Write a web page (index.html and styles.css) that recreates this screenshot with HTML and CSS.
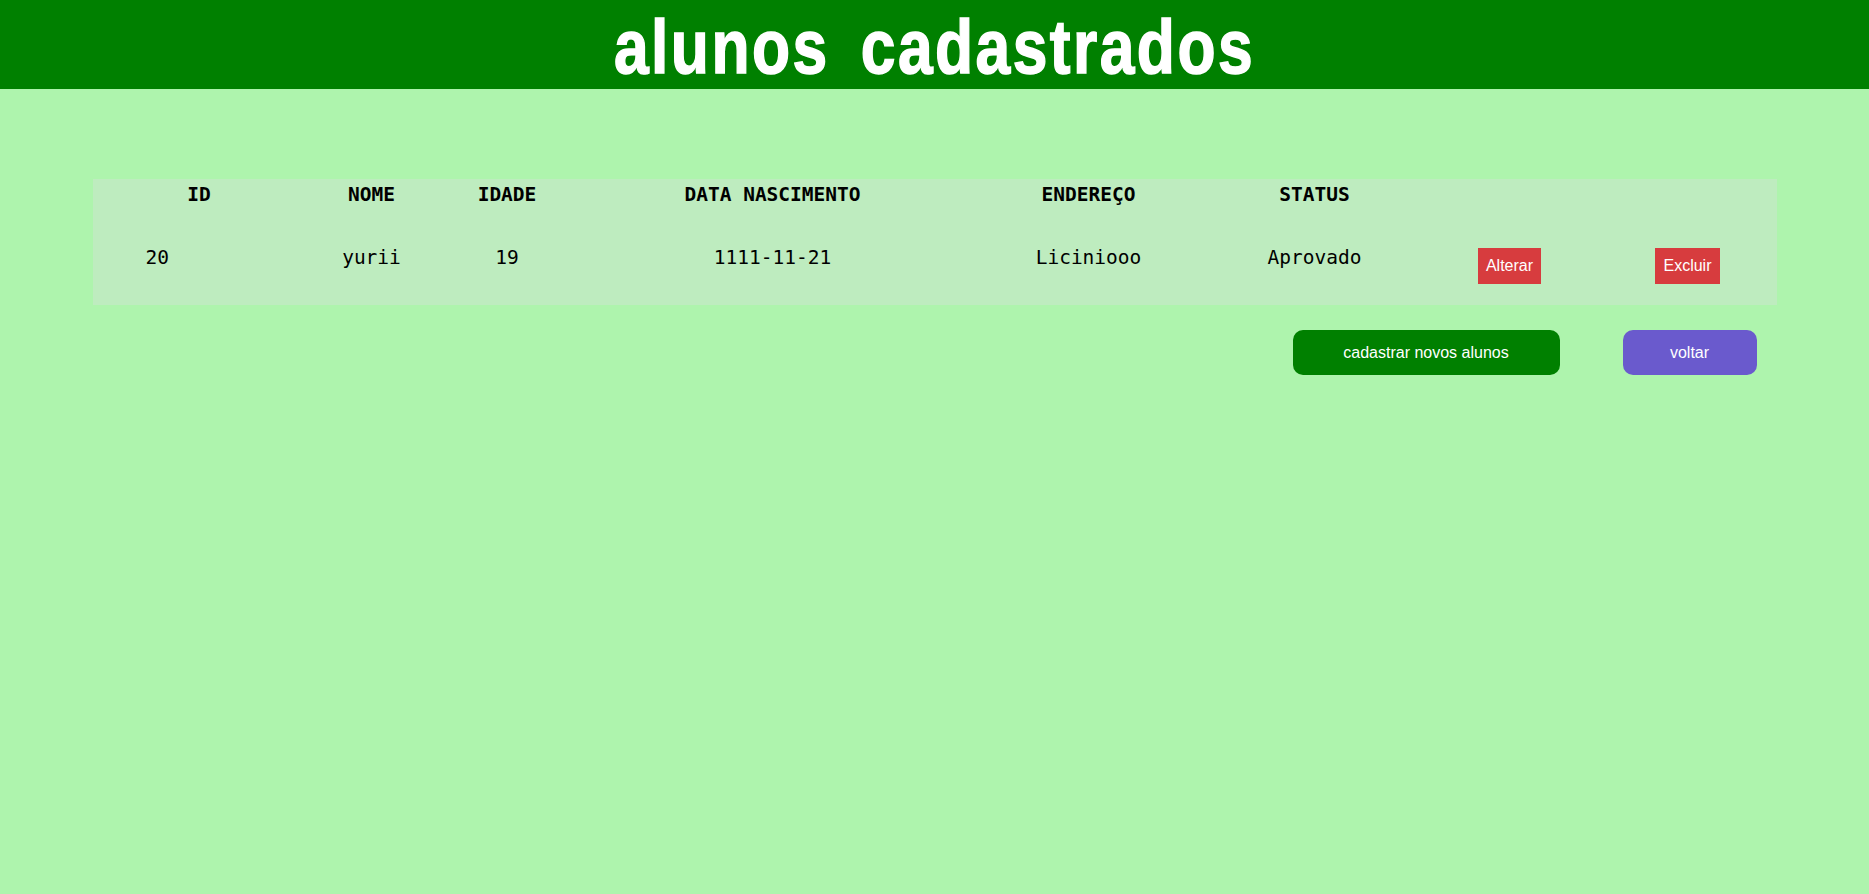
FILE: index.html
```html
<!DOCTYPE html>
<html lang="pt-BR">
<head>
<meta charset="utf-8">
<title>alunos cadastrados</title>
<link rel="stylesheet" href="styles.css">
</head>
<body>
<header class="topbar">
  <h1 class="title">alunos cadastrados</h1>
</header>
<main class="content">
  <table class="alunos">
    <colgroup>
      <col class="c-id"><col class="c-nome"><col class="c-idade"><col class="c-data">
      <col class="c-end"><col class="c-status"><col class="c-alt"><col class="c-exc">
    </colgroup>
    <thead>
      <tr>
        <th>ID</th>
        <th>NOME</th>
        <th>IDADE</th>
        <th>DATA NASCIMENTO</th>
        <th>ENDEREÇO</th>
        <th>STATUS</th>
        <th></th>
        <th></th>
      </tr>
    </thead>
    <tbody>
      <tr>
        <td class="cell-id">20</td>
        <td>yurii</td>
        <td>19</td>
        <td>1111-11-21</td>
        <td>Liciniooo</td>
        <td>Aprovado</td>
        <td class="cell-btn"><a class="btn-danger" href="#">Alterar</a></td>
        <td class="cell-btn"><a class="btn-danger" href="#">Excluir</a></td>
      </tr>
    </tbody>
  </table>
  <div class="actions">
    <a class="btn-round btn-green" href="#">cadastrar novos alunos</a>
    <a class="btn-round btn-purple" href="#">voltar</a>
  </div>
</main>
</body>
</html>
```

FILE: styles.css
```css
html, body {
  margin: 0;
  padding: 0;
}

body {
  background: #aef4ad;
  font-family: "Liberation Sans", Arial, sans-serif;
  min-height: 894px;
}

.topbar {
  background: #008000;
  height: 89px;
  text-align: center;
  overflow: hidden;
}

.title {
  margin: 0;
  color: #ffffff;
  font-family: "Liberation Sans", Arial, sans-serif;
  font-weight: bold;
  font-size: 76px;
  letter-spacing: 3px;
  word-spacing: 14px;
  line-height: 93px;
  height: 89px;
  -webkit-text-stroke: 1.5px #ffffff;
  transform: scaleX(0.82);
}

.content {
  padding-top: 90px;
}

.alunos {
  width: 1684px;
  margin: 0 auto;
  border-collapse: collapse;
  table-layout: fixed;
  background: #beecbf;
  font-family: "DejaVu Sans Mono", "Liberation Mono", monospace;
  font-size: 19.5px;
  line-height: 22px;
  color: #000;
}

.c-id { width: 213px; }
.c-nome { width: 132px; }
.c-idade { width: 139px; }
.c-data { width: 392px; }
.c-end { width: 240px; }
.c-status { width: 212px; }
.c-alt { width: 178px; }
.c-exc { width: 178px; }

.alunos th {
  font-weight: bold;
  text-align: center;
  vertical-align: top;
  padding: 5px 0 0;
  height: 46px;
  box-sizing: border-box;
}

.alunos td {
  text-align: center;
  vertical-align: top;
  padding: 22px 0 0;
  height: 80px;
  box-sizing: border-box;
}

.alunos td.cell-id {
  text-align: left;
  padding-left: 53px;
}

.alunos td.cell-btn {
  padding-top: 23px;
}

.btn-danger {
  display: inline-block;
  background: #d73c3e;
  color: #ffffff;
  font-family: "Liberation Sans", Arial, sans-serif;
  font-size: 16px;
  line-height: 20px;
  padding: 8px;
  text-decoration: none;
}

.actions {
  width: 1684px;
  margin: 25px auto 0;
  display: flex;
  justify-content: flex-end;
  gap: 63px;
  padding-right: 20px;
  box-sizing: border-box;
}

.btn-round {
  display: flex;
  align-items: center;
  justify-content: center;
  height: 45px;
  padding: 0 48px;
  border-radius: 10px;
  color: #ffffff;
  font-family: "Liberation Sans", Arial, sans-serif;
  font-size: 16px;
  text-decoration: none;
}

.btn-green {
  background: #008000;
  width: 267px;
  box-sizing: border-box;
}

.btn-purple {
  background: #6a5acd;
  width: 134px;
  box-sizing: border-box;
}
```
